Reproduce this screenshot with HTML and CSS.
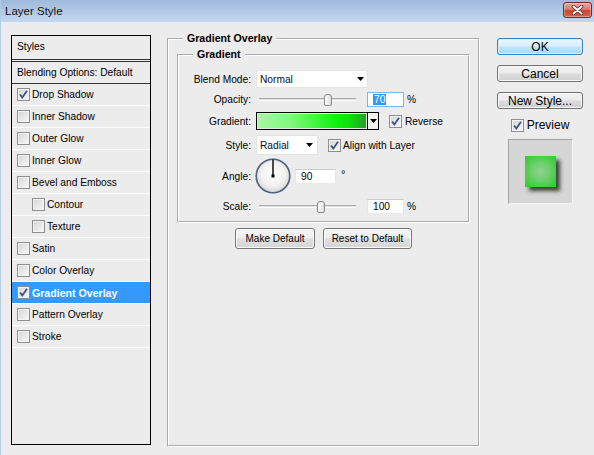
FILE: index.html
```html
<!DOCTYPE html>
<html>
<head>
<meta charset="utf-8">
<title>Layer Style</title>
<link rel="stylesheet" href="styles.css">
</head>
<body>
<div class="window">
  <div class="titlebar">
    <span class="title">Layer Style</span>
    <div class="close">
      <svg width="13" height="10" viewBox="0 0 13 10"><path d="M2.5 1.5 L10.5 8.5 M10.5 1.5 L2.5 8.5" stroke="#5a2a26" stroke-width="3.6" stroke-linecap="round"/><path d="M2.5 1.5 L10.5 8.5 M10.5 1.5 L2.5 8.5" stroke="#fff" stroke-width="2" stroke-linecap="round"/></svg>
    </div>
  </div>
  <div class="content">
    <div class="stylelist">
      <div class="hdr">Styles</div>
      <div class="blend">Blending Options: Default</div>
      <div class="item"><span class="cb on"><svg width="11" height="11" viewBox="0 0 11 11"><path d="M2 5.5 L4.3 8.5 L9 1.8" fill="none" stroke="#3f4f88" stroke-width="1.8"/></svg></span>Drop Shadow</div>
      <div class="item"><span class="cb"></span>Inner Shadow</div>
      <div class="item"><span class="cb"></span>Outer Glow</div>
      <div class="item"><span class="cb"></span>Inner Glow</div>
      <div class="item"><span class="cb"></span>Bevel and Emboss</div>
      <div class="item sub"><span class="cb"></span>Contour</div>
      <div class="item sub"><span class="cb"></span>Texture</div>
      <div class="item"><span class="cb"></span>Satin</div>
      <div class="item"><span class="cb"></span>Color Overlay</div>
      <div class="item sel"><span class="cb on"><svg width="11" height="11" viewBox="0 0 11 11"><path d="M2 5.5 L4.3 8.5 L9 1.8" fill="none" stroke="#3f4f88" stroke-width="1.8"/></svg></span>Gradient Overlay</div>
      <div class="item"><span class="cb"></span>Pattern Overlay</div>
      <div class="item"><span class="cb"></span>Stroke</div>
    </div>

    <fieldset class="group outer">
      <legend>Gradient Overlay</legend>
      <fieldset class="group inner">
        <legend>Gradient</legend>
        <div class="row r-blend">
          <span class="lbl">Blend Mode:</span>
          <div class="select sel-blend"><span>Normal</span><svg width="7" height="4" viewBox="0 0 7 4"><polygon points="0,0 7,0 3.5,4" fill="#000"/></svg></div>
        </div>
        <div class="row r-opacity">
          <span class="lbl">Opacity:</span>
          <div class="slider"><div class="track"></div><div class="thumb" style="left:65px"></div></div>
          <div class="input focus"><span class="hl">70</span></div>
          <span class="pct">%</span>
        </div>
        <div class="row r-grad">
          <span class="lbl">Gradient:</span>
          <div class="gradbox"><div class="gfill"></div><div class="garrow"><svg width="7" height="4" viewBox="0 0 7 4"><polygon points="0,0 7,0 3.5,4" fill="#000"/></svg></div></div>
          <span class="cb on cb-after"><svg width="11" height="11" viewBox="0 0 11 11"><path d="M2 5.5 L4.3 8.5 L9 1.8" fill="none" stroke="#3f4f88" stroke-width="1.8"/></svg></span>
          <span class="cbtext">Reverse</span>
        </div>
        <div class="row r-style">
          <span class="lbl">Style:</span>
          <div class="select sel-style"><span>Radial</span><svg width="7" height="4" viewBox="0 0 7 4"><polygon points="0,0 7,0 3.5,4" fill="#000"/></svg></div>
          <span class="cb on cb-after"><svg width="11" height="11" viewBox="0 0 11 11"><path d="M2 5.5 L4.3 8.5 L9 1.8" fill="none" stroke="#3f4f88" stroke-width="1.8"/></svg></span>
          <span class="cbtext">Align with Layer</span>
        </div>
        <div class="row r-angle">
          <span class="lbl">Angle:</span>
          <svg class="dial" width="36" height="36" viewBox="0 0 36 36">
            <defs>
              <radialGradient id="dg" cx="50%" cy="45%" r="55%">
                <stop offset="0%" stop-color="#ffffff"/>
                <stop offset="65%" stop-color="#f1f1ee"/>
                <stop offset="100%" stop-color="#d4d4d0"/>
              </radialGradient>
            </defs>
            <circle cx="18" cy="18" r="16.8" fill="url(#dg)" stroke="#4f6088" stroke-width="1.6"/>
            <line x1="18" y1="1.5" x2="18" y2="18" stroke="#000" stroke-width="1.4"/>
            <rect x="16.5" y="16.5" width="3" height="3" fill="#000"/>
          </svg>
          <div class="input angle-in">90</div>
          <span class="deg">°</span>
        </div>
        <div class="row r-scale">
          <span class="lbl">Scale:</span>
          <div class="slider"><div class="track"></div><div class="thumb" style="left:58px"></div></div>
          <div class="input">100</div>
          <span class="pct">%</span>
        </div>
      </fieldset>
      <div class="btnrow">
        <div class="pbtn w-make">Make Default</div>
        <div class="pbtn w-reset">Reset to Default</div>
      </div>
    </fieldset>

    <div class="side">
      <div class="sbtn ok">OK</div>
      <div class="sbtn">Cancel</div>
      <div class="sbtn">New Style...</div>
      <div class="prev"><span class="cb on"><svg width="11" height="11" viewBox="0 0 11 11"><path d="M2 5.5 L4.3 8.5 L9 1.8" fill="none" stroke="#3f4f88" stroke-width="1.8"/></svg></span><span>Preview</span></div>
      <div class="swatch"><div class="sq"></div></div>
    </div>
  </div>
</div>
</body>
</html>
```

FILE: styles.css
```css
* { box-sizing: border-box; }
html, body { margin: 0; padding: 0; }
body {
  width: 594px;
  height: 455px;
  overflow: hidden;
  background: #ececec;
  font-family: "Liberation Sans", Arial, sans-serif;
  font-size: 10.2px;
  color: #000;
}
.window {
  width: 594px;
  height: 455px;
  display: flex;
  flex-direction: column;
  border-left: 1px solid #b2cbe9;
  background: #ececec;
}
.titlebar {
  height: 22px;
  flex: none;
  display: flex;
  align-items: center;
  justify-content: space-between;
  padding: 0 2px 0 4px;
  background: linear-gradient(#9fb9dc, #c3d8ef);
}
.title { font-size: 11.5px; color: #111; }
.close {
  width: 29px;
  height: 16px;
  margin-top: -2px;
  border: 1px solid #6e2c27;
  border-radius: 3px;
  background: linear-gradient(#eaa99b, #dc7a64 45%, #c9452f 55%, #d5654c);
  box-shadow: inset 0 0 0 1px rgba(255, 215, 205, 0.45);
  display: flex;
  align-items: center;
  justify-content: center;
}
.content {
  flex: 1;
  display: flex;
  align-items: flex-start;
  padding-left: 10px;
}

/* left styles list */
.stylelist {
  width: 140px;
  height: 410px;
  margin-top: 13px;
  border: 1px solid #000;
  flex: none;
}
.hdr {
  height: 26px;
  line-height: 22px;
  padding-left: 5px;
  border-bottom: 3px double #333;
}
.blend {
  height: 22px;
  line-height: 21px;
  padding-left: 5px;
  border-bottom: 1px solid #333;
}
.item {
  height: 22px;
  display: flex;
  align-items: center;
  gap: 2px;
  padding-left: 5px;
  border-bottom: 1px solid #fff;
}
.item.sub { padding-left: 20px; }
.item.sel {
  background: #3399ff;
  color: #fff;
  font-weight: bold;
  font-size: 10.6px;
}

/* checkbox */
.cb {
  width: 13px;
  height: 13px;
  flex: none;
  border: 1px solid #8e8f8f;
  background: linear-gradient(135deg, #d4d4d4, #f9f9f9);
  box-shadow: inset 0 0 0 1px #f3f3f3;
  display: flex;
  align-items: center;
  justify-content: center;
}
.cb svg { display: block; }

/* group boxes */
.group {
  min-width: 0;
  border: 2px groove #fff;
}
.group > legend {
  padding: 0 4px;
  font-weight: bold;
  font-size: 10.6px;
  line-height: 13px;
}
.group.outer {
  flex: none;
  width: 313px;
  height: 415px;
  margin: 10px 0 0 16px;
  padding: 3px 8px 0 8px;
}
.group.outer > legend { margin-left: 6px; }
.group.inner { margin: 0; padding: 0 0 7px 0; }
.group.inner > legend { margin-left: 14px; }

.row { display: flex; align-items: center; }
.lbl { width: 72px; flex: none; text-align: right; margin-right: 5px; }
.r-blend { margin-top: 9px; height: 18px; }
.r-opacity { margin-top: 4px; height: 15px; }
.r-grad { margin-top: 5px; height: 18px; }
.r-style { margin-top: 5px; height: 20px; }
.r-angle { margin-top: 3px; height: 36px; align-items: flex-start; }
.r-angle .lbl { align-self: center; }
.r-scale { margin-top: 5px; height: 15px; }

.select {
  height: 100%;
  background: #fff;
  border: 1px solid #e4e4e4;
  display: flex;
  align-items: center;
  justify-content: space-between;
  padding: 0 3px 0 3px;
  color: #0c0c2a;
}
.select svg { display: block; }
.sel-blend { width: 112px; }
.sel-style { width: 62px; padding-right: 4px; }

.slider {
  position: relative;
  width: 97px;
  height: 12px;
  margin-left: 3px;
  display: flex;
  align-items: center;
}
.track {
  width: 100%;
  height: 3px;
  background: #e2e2e2;
  border-top: 1px solid #a9a9a9;
  border-bottom: 1px solid #fdfdfd;
}
.thumb {
  position: absolute;
  top: 0;
  width: 8px;
  height: 12px;
  border: 1px solid #8b8b8b;
  border-radius: 3px 3px 2px 2px;
  background: linear-gradient(90deg, #fdfdfd, #dedede);
}
.input {
  width: 37px;
  height: 15px;
  margin-left: 11px;
  background: #fff;
  border: 1px solid;
  border-color: #c8cbd1 #e3e6ea #e8ebee #e3e6ea;
  padding-left: 5px;
  line-height: 13px;
}
.input.focus { border-color: #7eb4ea; }
.hl { background: #3399ff; color: #fff; padding: 0 1px; }
.pct { margin-left: 3px; }

.gradbox {
  width: 123px;
  height: 18px;
  border: 1px solid #000;
  display: flex;
  background: #fff;
}
.gfill {
  flex: 1;
  border: 1px solid #e8e8e8;
  background: linear-gradient(to right, #a7f9a2 0%, #80f87c 30%, #3cf63a 55%, #0ff20f 72%, #0ee00e 84%, #2a9b2a 100%);
}
.garrow {
  width: 11px;
  flex: none;
  border-left: 1px solid #000;
  background: #f2f2f2;
  display: flex;
  align-items: center;
  justify-content: center;
}
.cb-after { margin-left: 10px; }
.cbtext { margin-left: 3px; }
.r-style .cbtext { margin-left: 2px; }

.dial { display: block; margin-left: -1px; flex: none; }
.angle-in {
  width: 41px;
  margin-left: 4px;
  margin-top: 11px;
}
.deg { margin-left: 5px; margin-top: 10px; font-size: 11px; }

.btnrow {
  display: flex;
  justify-content: center;
  gap: 8px;
  margin-top: 5px;
}
.pbtn {
  height: 21px;
  border: 1px solid #777;
  border-radius: 3px;
  background: linear-gradient(#f6f6f6, #ececec 48%, #dfdfdf 52%, #d6d6d6);
  box-shadow: inset 0 0 0 1px #fbfbfb;
  display: flex;
  align-items: center;
  justify-content: center;
  font-size: 10px;
}
.w-make { width: 80px; }
.w-reset { width: 89px; }

/* right column */
.side {
  flex: none;
  width: 86px;
  margin: 16px 0 0 17px;
  display: flex;
  flex-direction: column;
  align-items: center;
}
.sbtn {
  width: 86px;
  height: 17px;
  border: 1px solid #707070;
  border-radius: 3px;
  background: linear-gradient(#f3f3f3, #ebebeb 48%, #dddddd 52%, #cfcfcf);
  box-shadow: inset 0 0 0 1px #fbfbfb;
  font-size: 12px;
  display: flex;
  align-items: center;
  justify-content: center;
}
.sbtn + .sbtn { margin-top: 10px; }
.sbtn.ok {
  border-color: #3c7fb1;
  background: linear-gradient(#e9f5fc, #d9effc 48%, #bde5fb 52%, #a9daf6);
  box-shadow: inset 0 0 0 1px #d8eefb;
}
.prev {
  margin-top: 9px;
  height: 14px;
  display: flex;
  align-items: center;
  gap: 3px;
  font-size: 12px;
}
.swatch {
  margin-top: 7px;
  width: 65px;
  height: 65px;
  background: #d6d6d6;
  border: 1px solid;
  border-color: #a3a3a3 #f4f4f4 #f4f4f4 #a3a3a3;
  padding: 16px;
}
.sq {
  width: 31px;
  height: 31px;
  background: radial-gradient(circle, #93d193 0%, #6fcf6f 40%, #3ccd3c 80%, #33cc33 100%);
  box-shadow: 4px 4px 4px rgba(0, 0, 0, 0.7);
}
```
